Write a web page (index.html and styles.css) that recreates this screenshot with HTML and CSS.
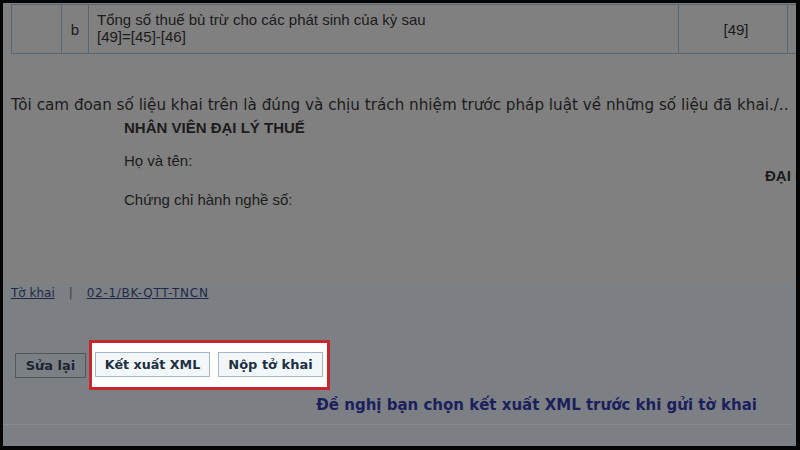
FILE: index.html
```html
<!DOCTYPE html>
<html lang="vi">
<head>
<meta charset="utf-8">
<title>Tờ khai</title>
<link rel="stylesheet" href="styles.css">
</head>
<body>
<div class="screen">
  <div class="page">
    <div class="upper">
      <table class="grid">
        <tr>
          <td class="c1"></td>
          <td class="c2">b</td>
          <td class="c3">Tổng số thuế bù trừ cho các phát sinh của kỳ sau<br>[49]=[45]-[46]</td>
          <td class="c4">[49]</td>
          <td class="c5"></td>
        </tr>
      </table>
      <p class="declare">Tôi cam đoan số liệu khai trên là đúng và chịu trách nhiệm trước pháp luật về những số liệu đã khai./..</p>
      <div class="sign">
        <div class="sign-left">
          <div class="sign-title">NHÂN VIÊN ĐẠI LÝ THUẾ</div>
          <div class="sign-name">Họ và tên:</div>
          <div class="sign-cert">Chứng chỉ hành nghề số:</div>
        </div>
        <div class="sign-right">ĐẠI DIỆN HỢP PHÁP CỦA NGƯỜI NỘP THUẾ</div>
      </div>
    </div>
    <div class="lower">
      <div class="links">
        <a href="#" class="link">Tờ khai</a>
        <span class="sep">|</span>
        <a href="#" class="link link-code">02-1/BK-QTT-TNCN</a>
      </div>
      <div class="actions">
        <button class="btn btn-dim">Sửa lại</button>
        <div class="highlight">
          <button class="btn btn-lit btn-xml">Kết xuất XML</button>
          <button class="btn btn-lit btn-send">Nộp tở khai</button>
        </div>
      </div>
      <div class="notice">Đề nghị bạn chọn kết xuất XML trước khi gửi tờ khai</div>
      <div class="rule"></div>
    </div>
  </div>
</div>
</body>
</html>
```
FILE: styles.css
```css
html, body {
  margin: 0;
  padding: 0;
  background: #000;
}
.screen {
  width: 800px;
  height: 450px;
  box-sizing: border-box;
  padding: 3px 4px 4px 3px;
  background: #050505;
}
.page {
  width: 100%;
  height: 100%;
  overflow: hidden;
  background: #808080;
  display: flex;
  flex-direction: column;
}
.upper {
  height: 281px;
  flex: none;
}
.grid {
  margin: 1px 0 0 8px;
  border-collapse: collapse;
  table-layout: fixed;
  width: 830px;
  font-family: "Liberation Sans", Arial, sans-serif;
  font-size: 15px;
  color: #1b1b1b;
}
.grid td {
  border: 1px solid #5b666e;
  height: 49px;
  padding: 0;
  box-sizing: border-box;
  vertical-align: middle;
  line-height: 17px;
  overflow: hidden;
  white-space: nowrap;
}
.c1 { width: 50px; }
.c2 { width: 27px; text-align: center; }
.c3 { width: 590px; padding-left: 8px !important; padding-bottom: 3px !important; }
.c4 { width: 109px; text-align: center; padding-left: 6px !important; }
.c5 { width: 54px; }
.declare {
  margin: 42px 0 0 8px;
  font-family: "DejaVu Sans", Verdana, sans-serif;
  font-size: 15.2px;
  line-height: 18px;
  color: #1c1c1c;
  white-space: nowrap;
}
.sign {
  display: flex;
  padding-left: 121px;
  font-family: "Liberation Sans", Arial, sans-serif;
  font-size: 15px;
  line-height: 18px;
  color: #1c1c1c;
}
.sign-left {
  width: 641px;
  flex: none;
}
.sign-title {
  margin-top: 5px;
  font-weight: bold;
}
.sign-name {
  margin-top: 15px;
}
.sign-cert {
  margin-top: 21px;
}
.sign-right {
  flex: none;
  white-space: nowrap;
  font-weight: bold;
  padding-top: 53px;
}
.lower {
  flex: 1;
  background: #7c7f83;
  display: flex;
  flex-direction: column;
}
.links {
  padding: 2px 0 0 8px;
  font-family: "DejaVu Sans", Verdana, sans-serif;
  font-size: 12px;
  line-height: 14px;
  color: #1f2a48;
  display: flex;
}
.link {
  color: #1f2a48;
  text-decoration: underline;
}
.link-code {
  letter-spacing: 0.7px;
}
.sep {
  margin: 0 14px 0 14px;
  color: #3a3f48;
}
.actions {
  margin-top: 40px;
  padding-left: 12px;
  display: flex;
  align-items: center;
}
.btn {
  font-family: "DejaVu Sans", Tahoma, sans-serif;
  font-weight: bold;
  font-size: 13px;
  height: 25px;
  line-height: 23px;
  padding: 0;
  margin: 0;
  box-sizing: border-box;
}
.btn-dim {
  background: #7b8085;
  border: 1px solid #50565c;
  color: #1b2530;
  width: 71px;
}
.highlight {
  margin-left: 3px;
  border: 3px solid #c6262d;
  background: #ffffff;
  padding: 9px 4px 10px 3px;
  display: flex;
  gap: 8px;
}
.btn-lit {
  background: #f2f7fa;
  border: 1px solid #a6b6c4;
  color: #1e2f42;
}
.btn-xml { width: 115px; font-size: 12.7px; }
.btn-send { width: 105px; }
.notice {
  margin-top: 6px;
  padding-right: 39px;
  text-align: right;
  font-family: "DejaVu Sans", Tahoma, sans-serif;
  font-weight: bold;
  font-size: 15px;
  line-height: 18px;
  color: #1c1f5e;
}
.rule {
  margin-top: 10px;
  border-top: 1px solid #888a8e;
  margin-right: 4px;
}
```
